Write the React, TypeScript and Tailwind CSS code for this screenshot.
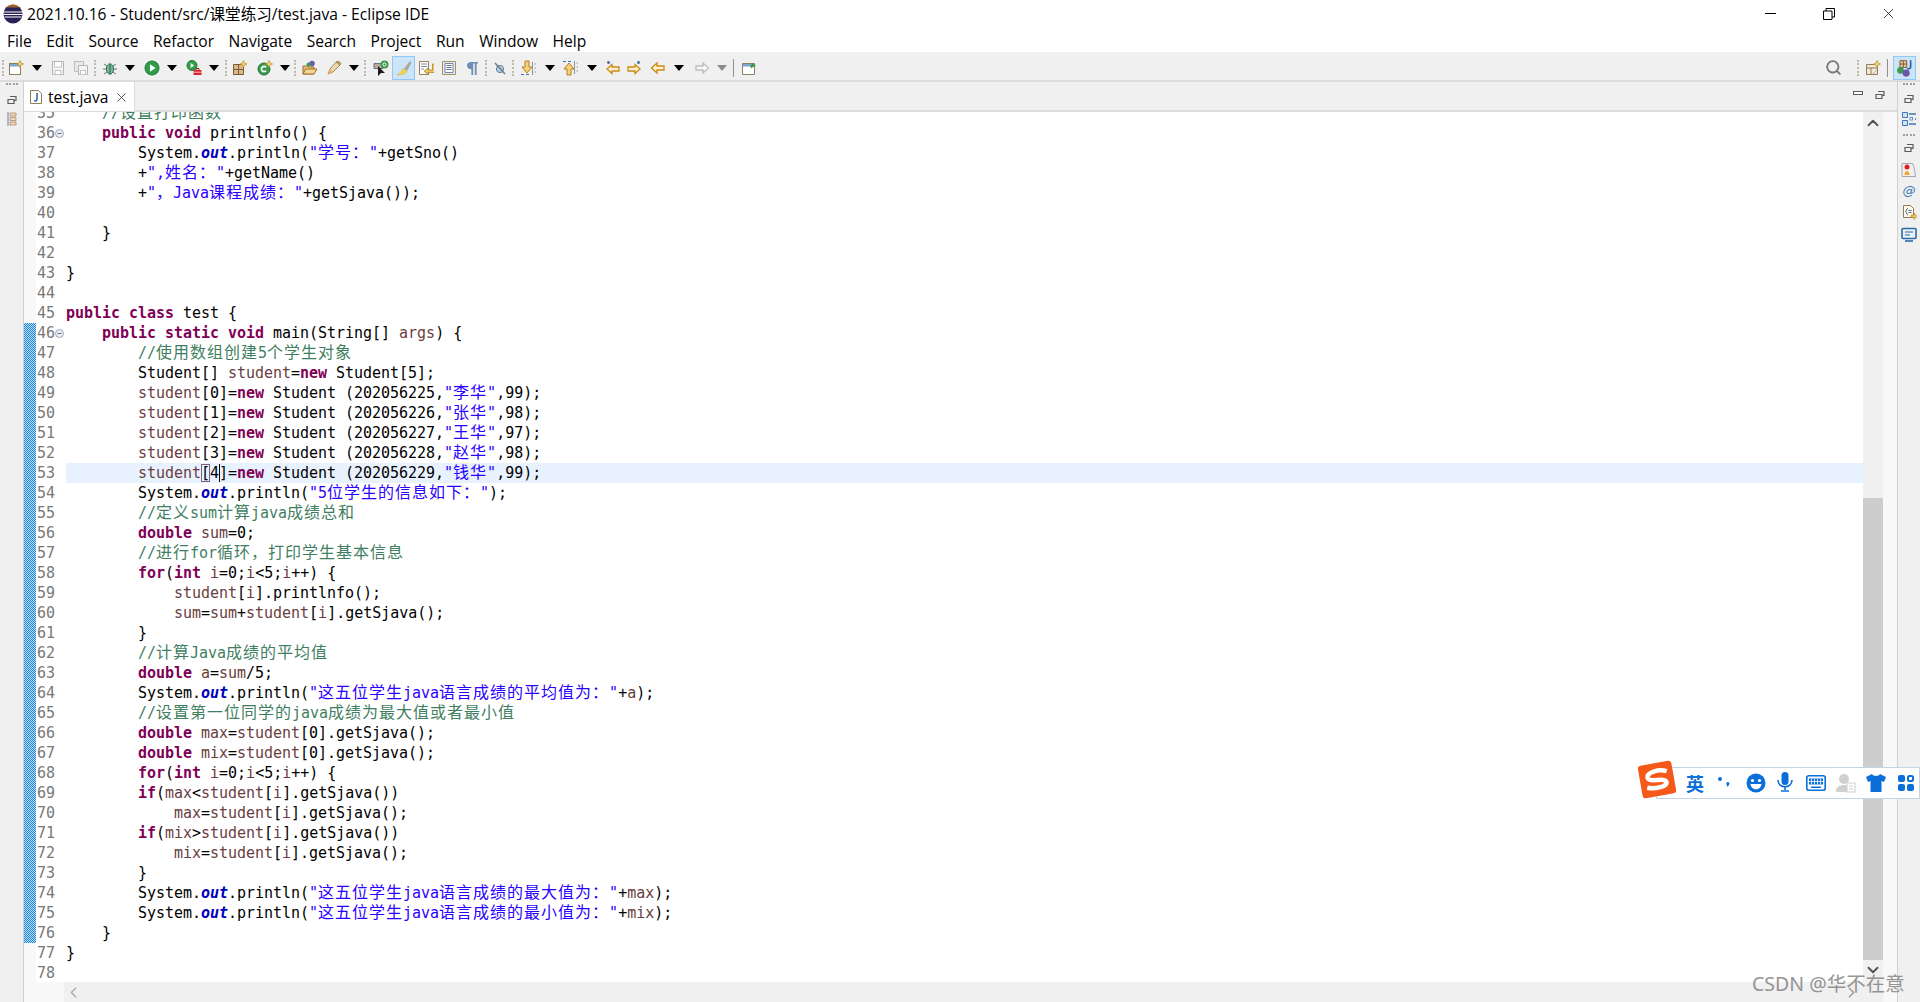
import { ChevronDown, ChevronLeft, ChevronRight, ChevronUp, Search, X } from "lucide-react";
import type { ReactNode } from "react";

const ui = "font-['Open_Sans','Noto_Sans_CJK_SC',sans-serif]";

const code = `    //设置打印函数
    public void printlnfo() {
        System.out.println("学号："+getSno()
        +",姓名："+getName()
        +"，Java课程成绩："+getSjava());

    }

}

public class test {
    public static void main(String[] args) {
        //使用数组创建5个学生对象
        Student[] student=new Student[5];
        student[0]=new Student (202056225,"李华",99);
        student[1]=new Student (202056226,"张华",98);
        student[2]=new Student (202056227,"王华",97);
        student[3]=new Student (202056228,"赵华",98);
        student[4]=new Student (202056229,"钱华",99);
        System.out.println("5位学生的信息如下：");
        //定义sum计算java成绩总和
        double sum=0;
        //进行for循环，打印学生基本信息
        for(int i=0;i<5;i++) {
            student[i].printlnfo();
            sum=sum+student[i].getSjava();
        }
        //计算Java成绩的平均值
        double a=sum/5;
        System.out.println("这五位学生java语言成绩的平均值为："+a);
        //设置第一位同学的java成绩为最大值或者最小值
        double max=student[0].getSjava();
        double mix=student[0].getSjava();
        for(int i=0;i<5;i++) {
        if(max<student[i].getSjava())
            max=student[i].getSjava();
        if(mix>student[i].getSjava())
            mix=student[i].getSjava();
        }
        System.out.println("这五位学生java语言成绩的最大值为："+max);
        System.out.println("这五位学生java语言成绩的最小值为："+mix);
    }
}
`.split("\n");

const tokenRe =
  /(\/\/.*$)|("[^"]*")|\b(public|void|class|static|new|double|int|for|if)\b|\b(out)\b|\b(student|args|sum|a|max|mix|i)\b/g;

// cjk glyphs are 17px wide in the editor, leading-[0] keeps the baseline on the mono font
const Wide = ({ text }: { text: string }) => (
  <>
    {text.split(/([\u3000-\u9fff\uff00-\uffef]+)/).map((part, i) =>
      i % 2 ? (
        <span key={i} className="font-['Noto_Sans_CJK_SC',sans-serif] text-[16px] leading-[0] tracking-[1px]">
          {part}
        </span>
      ) : (
        part
      ),
    )}
  </>
);

const highlight = (line: string) => {
  const out: ReactNode[] = [];
  let last = 0;
  for (const m of line.matchAll(tokenRe)) {
    const at = m.index ?? 0;
    if (at > last) out.push(<Wide key={last} text={line.slice(last, at)} />);
    if (m[1]) out.push(<span key={at} className="text-[#3f7f5f]"><Wide text={m[1]} /></span>);
    else if (m[2]) out.push(<span key={at} className="text-[#2a00ff]"><Wide text={m[2]} /></span>);
    else if (m[3]) out.push(<span key={at} className="font-bold text-[#7f0055]">{m[3]}</span>);
    else if (m[4]) out.push(<span key={at} className="font-bold italic text-[#0000c0]">{m[4]}</span>);
    else out.push(<span key={at} className="text-[#6a3e3e]">{m[5]}</span>);
    last = at + m[0].length;
  }
  if (last < line.length) out.push(<Wide key={last} text={line.slice(last)} />);
  return out;
};

const Ico = ({ children, className = "" }: { children: ReactNode; className?: string }) => (
  <svg viewBox="0 0 16 16" className={`h-4 w-4 shrink-0 ${className}`}>
    {children}
  </svg>
);

const Arrow = ({ className = "", off = false }: { className?: string; off?: boolean }) => (
  <svg viewBox="0 0 10 6" className={`h-[6px] w-[10px] shrink-0 ${className}`}>
    <path d="M0 0h10L5 6z" fill={off ? "#8c8c8c" : "#000"} />
  </svg>
);

const Grip = ({ className = "" }: { className?: string }) => (
  <div className={`h-4 w-[2px] shrink-0 border-l-2 border-dotted border-[#bdb8a8] ${className}`} />
);

const Star = ({ x = 12, y = 4 }: { x?: number; y?: number }) => (
  <path d={`M${x} ${y - 3.5}l1 2.5 2.5 1-2.5 1-1 2.5-1-2.5-2.5-1 2.5-1z`} fill="#f8d878" stroke="#b98b22" strokeWidth=".7" />
);

const Restore = ({ className = "" }: { className?: string }) => (
  <svg viewBox="0 0 10 10" className={`h-[10px] w-[10px] shrink-0 ${className}`}>
    <path d="M3 1.5h6v4H7M1 4.5h6v4H1zM1 4.5h6M3 1.5h6" fill="none" stroke="#5c5c5c" strokeWidth="1.2" />
  </svg>
);

const NewFile = (p: { className?: string }) => (
  <Ico {...p}>
    <rect x="1.5" y="3.5" width="11" height="11" fill="#fff" stroke="#8d7f52" />
    <rect x="2" y="4" width="10" height="2.5" fill="#7aa7d6" />
    <Star x={12} y={4} />
  </Ico>
);
const Floppy = ({ className = "" }: { className?: string }) => (
  <Ico className={className}>
    <path d="M2.5 1.5h11v13h-11z" fill="#f4f4f4" stroke="#b5b5b5" />
    <path d="M4.5 2v5h7V2M5 10.5h6v4H5z" fill="#fff" stroke="#c2c2c2" />
  </Ico>
);
const FloppyAll = ({ className = "" }: { className?: string }) => (
  <Ico className={className}>
    <path d="M1.5 1.5h9v10h-9z" fill="#e9e9e9" stroke="#bdbdbd" />
    <path d="M5.5 5.5h9v9h-9z" fill="#f4f4f4" stroke="#b5b5b5" />
    <path d="M7.5 10.5h5v4h-5z" fill="#fff" stroke="#c2c2c2" />
  </Ico>
);
const Bug = ({ className = "" }: { className?: string }) => (
  <Ico className={className}>
    <path d="M2 4l3 2M14 4l-3 2M1 9h3M15 9h-3M2 14l3-2M14 14l-3-2" stroke="#5b7f6b" fill="none" />
    <ellipse cx="8" cy="9" rx="3.6" ry="5.2" fill="#79b99c" stroke="#3f6f5e" />
    <path d="M8 4v10" stroke="#2f5f50" />
  </Ico>
);
const Run = ({ className = "" }: { className?: string }) => (
  <Ico className={className}>
    <circle cx="8" cy="8" r="7" fill="#2f9e48" stroke="#1c7a34" />
    <path d="M6 4.2l5.5 3.8L6 11.8z" fill="#fff" />
  </Ico>
);
const RunExt = ({ className = "" }: { className?: string }) => (
  <Ico className={className}>
    <circle cx="6" cy="5.5" r="5" fill="#2f9e48" stroke="#1c7a34" />
    <path d="M4.6 3l3.6 2.5L4.6 8z" fill="#fff" />
    <rect x="7.5" y="10" width="8" height="5" fill="#d8262c" />
    <path d="M10 10V8.5h3V10" fill="none" stroke="#a31a1e" />
    <path d="M7.5 12.2h8" stroke="#fff" strokeWidth=".7" />
  </Ico>
);
const Pkg = ({ className = "" }: { className?: string }) => (
  <Ico className={className}>
    <path d="M1.5 4.5h10v10h-10z" fill="#d9b98c" stroke="#7d5a34" />
    <path d="M6.5 4.5v10M1.5 9.5h10" stroke="#7d5a34" />
    <Star x={11.5} y={4} />
  </Ico>
);
const NewClass = ({ className = "" }: { className?: string }) => (
  <Ico className={className}>
    <circle cx="7" cy="9" r="6" fill="#3c9a50" stroke="#20733a" />
    <path d="M9 7.2a2.6 2.6 0 1 0 0 3.6" fill="none" stroke="#fff" strokeWidth="1.6" />
    <Star x={12} y={4} />
  </Ico>
);
const OpenType = ({ className = "" }: { className?: string }) => (
  <Ico className={className}>
    <path d="M1 6h5l1 1h5v7H1z" fill="#e8c070" stroke="#99702a" />
    <path d="M1 14l2.5-5H15l-3 5z" fill="#f4d58f" stroke="#99702a" />
    <circle cx="10" cy="3.6" r="2.8" fill="#6e5fa8" />
    <circle cx="6.5" cy="4.5" r="2" fill="#3e9a58" />
  </Ico>
);
const Torch = ({ className = "" }: { className?: string }) => (
  <Ico className={className}>
    <path d="M2 14l2-5 6-7 4 3-7 7z" fill="#ecd9b0" stroke="#a88a52" />
    <path d="M10 2l4 3 1-2-3-2z" fill="#c7a468" stroke="#8f7038" strokeWidth=".6" />
    <path d="M2 14l2-5 3 3z" fill="#f3b26a" />
  </Ico>
);
const Toggle = ({ className = "" }: { className?: string }) => (
  <Ico className={className}>
    <path d="M1 3.5h9v5H1z" fill="#b9a8a0" stroke="#6f6f7f" />
    <circle cx="11.5" cy="4.5" r="4" fill="#3c9a50" />
    <circle cx="11.5" cy="4.5" r="1.6" fill="none" stroke="#fff" />
    <path d="M5 6v10l3-3h4z" fill="#1a1a1a" />
  </Ico>
);
const Brush = ({ className = "" }: { className?: string }) => (
  <Ico className={className}>
    <path d="M8 9L14 1l1.5 1.5L11 11z" fill="#a8a8a0" />
    <path d="M7 8.5l4 3c-1.5 2.5-5 3.5-10 3.5 2.5-1 4.5-3.5 6-6.5z" fill="#f2d750" stroke="#cfae2e" strokeWidth=".5" />
  </Ico>
);
const WordWrap = ({ className = "" }: { className?: string }) => (
  <Ico className={className}>
    <path d="M1.5 1.5h9v13h-9z" fill="#fff" stroke="#98835a" />
    <path d="M3 4h6M3 6.5h6M3 9h3" stroke="#7d8aa8" />
    <path d="M14.5 4v6H10V8l-4 3.2L10 14.5V12.5h6.5V4z" fill="#f0c460" stroke="#a87c1c" strokeWidth=".7" />
  </Ico>
);
const Block = ({ className = "" }: { className?: string }) => (
  <Ico className={className}>
    <path d="M1.5 1.5h13v13h-13z" fill="#eee8d8" stroke="#a09470" />
    <path d="M4 3.5h8v9H4z" fill="#fff" stroke="#6f87ad" />
    <path d="M5.5 5.5h5M5.5 7.5h5M5.5 9.5h5" stroke="#5a78a8" />
  </Ico>
);
const Para = ({ className = "" }: { className?: string }) => (
  <Ico className={className}>
    <path d="M7 2h7v1.6h-1.4V15h-1.8V3.6H9.2V15H7.4V9.3C4.8 9.3 3 7.9 3 5.6S4.6 2 7 2z" fill="#6d8fb5" />
  </Ico>
);
const Hide = ({ className = "" }: { className?: string }) => (
  <Ico className={className}>
    <ellipse cx="8" cy="9" rx="3.6" ry="3.6" fill="#b8cfe2" stroke="#5e7fa3" />
    <path d="M3 3l10 11" stroke="#6d7580" strokeWidth="1.4" />
  </Ico>
);
const NextAnn = ({ className = "" }: { className?: string }) => (
  <Ico className={className}>
    <path d="M5 1h4v6h3l-5 6-5-6h3z" fill="#f7d27a" stroke="#b5801c" />
    <path d="M1 14.5h3M6 14.5h3" stroke="#3d6fae" />
    <path d="M12.5 2v13M14.5 4h1.5M14.5 8h1.5M14.5 12h1.5" stroke="#8b95a5" />
  </Ico>
);
const PrevAnn = ({ className = "" }: { className?: string }) => (
  <Ico className={className}>
    <path d="M5 15h4V9h3L7 3 2 9h3z" fill="#f7d27a" stroke="#b5801c" />
    <path d="M1 1.5h3M6 1.5h3" stroke="#3d6fae" />
    <path d="M12.5 1v13M14.5 3h1.5M14.5 7h1.5M14.5 11h1.5" stroke="#8b95a5" />
  </Ico>
);
const BackStar = ({ className = "" }: { className?: string }) => (
  <Ico className={className}>
    <path d="M8 4.5L3 9l5 4.5V11h7V7H8z" fill="#fff3cf" stroke="#c98a18" strokeWidth="1.3" />
    <path d="M3 2.5h3M4.5 1v3M3.4 1.4l2.2 2.2M5.6 1.4L3.4 3.6" stroke="#3a5fa0" strokeWidth=".8" />
  </Ico>
);
const FwdStar = ({ className = "" }: { className?: string }) => (
  <Ico className={className}>
    <path d="M8 4.5L13 9l-5 4.5V11H1V7h7z" fill="#fff3cf" stroke="#c98a18" strokeWidth="1.3" />
    <path d="M10 2.5h3M11.5 1v3M10.4 1.4l2.2 2.2M12.6 1.4l-2.2 2.2" stroke="#3a5fa0" strokeWidth=".8" />
  </Ico>
);
const Back = ({ className = "" }: { className?: string }) => (
  <Ico className={className}>
    <path d="M7 3L1.5 8 7 13v-3h7V6H7z" fill="#fff3cf" stroke="#c98a18" strokeWidth="1.3" />
  </Ico>
);
const Fwd = ({ className = "" }: { className?: string }) => (
  <Ico className={className}>
    <path d="M9 3l5.5 5L9 13v-3H2V6h7z" fill="#f8f8f8" stroke="#bdbdbd" strokeWidth="1.3" />
  </Ico>
);
const PinWin = ({ className = "" }: { className?: string }) => (
  <Ico className={className}>
    <path d="M1.5 3.5h12v11h-12z" fill="#fff" stroke="#8c8060" />
    <path d="M2 4h11v2.5H2z" fill="#7aa7d6" />
    <path d="M9 6l3-3 3 3-3 1-1.5 1.5z" fill="#3c9a50" />
  </Ico>
);
const Persp = ({ className = "" }: { className?: string }) => (
  <Ico className={className}>
    <path d="M1.5 4.5h11v10h-11z" fill="#efe8d6" stroke="#8d7f52" />
    <path d="M1.5 8h11M6 8v6.5" stroke="#8d7f52" />
    <path d="M8 14l4-4" stroke="#b5b5a0" />
    <Star x={12} y={4} />
  </Ico>
);
const JavaPersp = ({ className = "" }: { className?: string }) => (
  <Ico className={`h-[18px] w-[18px] ${className}`}>
    <path d="M3.5 1.5h6v6h-6zM6.5 1.5v6M3.5 4.5h6" fill="#e3c9a0" stroke="#7a4f2a" strokeWidth=".8" />
    <path d="M13 1v6c0 1.5-1.5 2-3 1.6" fill="none" stroke="#2f5fa8" strokeWidth="1.5" />
    <circle cx="4" cy="10" r="3" fill="#3c9a50" />
    <circle cx="9" cy="12.5" r="3.2" fill="#6b55a8" />
  </Ico>
);
const Outline = ({ className = "" }: { className?: string }) => (
  <Ico className={className}>
    <path d="M1.5 1.5h5v5h-5zM1.5 9.5h5v5h-5z" fill="#cfe2f5" stroke="#3d77b5" />
    <path d="M8 3h7M14 8h1M8 13h7" stroke="#3d77b5" strokeWidth="1.3" />
    <rect x="9" y="6.5" width="2.5" height="2.5" fill="#fff" stroke="#3d77b5" strokeWidth=".8" />
  </Ico>
);
const Markers = ({ className = "" }: { className?: string }) => (
  <Ico className={className}>
    <path d="M1 1.5h10.5c1.5 3 2.5 8 3 13H1z" fill="#f2f0ea" stroke="#a0a8b8" />
    <circle cx="6" cy="5" r="2.5" fill="#e01f2c" />
    <path d="M3.5 13c0-2 1-4 2.5-4s2.5 2 2.5 4z" fill="#f2a43a" />
  </Ico>
);
const JavaDoc = ({ className = "" }: { className?: string }) => (
  <Ico className={className}>
    <path d="M2.5 1.5h7l3 3v9h-10z" fill="#fff8e6" stroke="#8d7f52" />
    <path d="M7 4.5C5 4.5 6 7.5 4.5 7.5 6 7.5 5 11 7 11M7.5 6.5h3M7.5 8.5h3" fill="none" stroke="#4d6d96" />
    <path d="M10 11h3V9l3 3.5-3 3V13.5h-3z" fill="#f0c460" stroke="#a87c1c" strokeWidth=".6" />
  </Ico>
);
const Console = ({ className = "" }: { className?: string }) => (
  <Ico className={className}>
    <rect x="1" y="1.5" width="14" height="10" rx="1" fill="#e9f1f9" stroke="#2c6ba5" strokeWidth="1.6" />
    <path d="M4 5h8M4 8h5" stroke="#2c6ba5" />
    <path d="M4 14h8" stroke="#2c6ba5" strokeWidth="1.6" />
  </Ico>
);

const Sogou = () => (
  <div className="absolute left-[1656px] top-[767px] flex h-[32px] w-[264px] items-center border border-[#c4d4e6] bg-white">
    <div className="absolute -left-[17px] -top-[5px] flex h-[33px] w-[34px] rotate-[-10deg] items-center justify-center rounded-[3px] bg-[#f4581a]">
      <svg viewBox="0 0 30 24" className="h-[24px] w-[30px]">
        <path d="M26 5C18 1 6 3 6 8c0 6 18 2 18 8 0 4-12 5-20 2" fill="none" stroke="#fff" strokeWidth="4.5" />
      </svg>
    </div>
    <span className="absolute left-[29px] top-[3px] font-['Noto_Sans_CJK_SC',sans-serif] text-[18px] font-bold leading-[24px] text-[#0a6fd8]">英</span>
    <svg viewBox="0 0 16 16" className="absolute left-[60px] top-[6px] h-4 w-4">
      <circle cx="3" cy="5" r="2" fill="#0a6fd8" />
      <path d="M11 8c2 0 2 3-1 5 .5-1.500 0-2-.6-2.500C9 9 10 8 11 8z" fill="#0a6fd8" />
    </svg>
    <svg viewBox="0 0 20 20" className="absolute left-[89px] top-[5px] h-5 w-5">
      <circle cx="10" cy="10" r="9.500" fill="#0a6fd8" />
      <circle cx="6.500" cy="7.500" r="1.600" fill="#fff" />
      <circle cx="13.500" cy="7.500" r="1.600" fill="#fff" />
      <path d="M4.500 11h11c-.5 7-10.500 7-11 0z" fill="#fff" />
    </svg>
    <svg viewBox="0 0 20 22" className="absolute left-[118px] top-[3px] h-[22px] w-5">
      <rect x="6.500" y="1" width="7" height="13" rx="3.500" fill="#0a6fd8" />
      <path d="M3 9c0 9 14 9 14 0M10 16v3M6 20h8" fill="none" stroke="#0a6fd8" strokeWidth="1.600" />
    </svg>
    <svg viewBox="0 0 20 16" className="absolute left-[149px] top-[7px] h-4 w-5">
      <rect x=".8" y=".8" width="18.400" height="14.400" rx="2" fill="#fff" stroke="#0a6fd8" strokeWidth="1.600" />
      <path d="M3 3.500h14v6H3zM5 11.500h10v1.500H5z" fill="#0a6fd8" />
      <path d="M5.500 3.500v6M8.500 3.500v6M11.500 3.500v6M14.500 3.500v6M3 6.500h14" stroke="#fff" strokeWidth=".8" />
    </svg>
    <svg viewBox="0 0 20 20" className="absolute left-[179px] top-[5px] h-5 w-5">
      <circle cx="8" cy="6" r="5" fill="#d0d0d0" />
      <path d="M0 19c0-5 3-7 8-7s8 2 8 7z" fill="#d0d0d0" />
      <rect x="11" y="10" width="8" height="9" fill="#fff" stroke="#cfcfcf" />
      <path d="M13 13h4M13 16h4" stroke="#cfcfcf" />
    </svg>
    <svg viewBox="0 0 20 20" className="absolute left-[209px] top-[5px] h-5 w-5">
      <path d="M6 1L0 4l2 5 2.500-1v11h11V8L18 9l2-5-6-3c-1 2.500-7 2.500-8 0z" fill="#0a6fd8" />
    </svg>
    <svg viewBox="0 0 18 18" className="absolute left-[240px] top-[6px] h-[18px] w-[18px]">
      <rect x="1" y="1" width="7" height="7" rx="2" fill="#0a6fd8" />
      <rect x="11" y="2" width="5" height="5" rx="1.500" fill="#fff" stroke="#0a6fd8" strokeWidth="2" />
      <rect x="1" y="10" width="7" height="7" rx="2" fill="#0a6fd8" />
      <rect x="10" y="10" width="7" height="7" rx="2" fill="#0a6fd8" />
    </svg>
  </div>
);

export default function App() {
  return (
    <div className={`relative flex h-[1002px] w-[1920px] flex-col overflow-hidden bg-white text-black ${ui}`}>
      {/* title bar */}
      <div className="flex h-[30px] shrink-0 items-center pb-[3px]">
        <svg viewBox="0 0 20 20" className="ml-[3px] h-5 w-5 shrink-0">
          <circle cx="10" cy="10" r="9.500" fill="#2c2255" />
          <path d="M1 8h18M.6 10.500h18.800M1.500 13h17" stroke="#fff" strokeWidth="1" />
          <path d="M3 3.500a9 9 0 0 1 14 0z" fill="#f7941e" opacity=".55" />
        </svg>
        <span className="ml-[4px] text-[15.6px] leading-5">2021.10.16 - Student/src/课堂练习/test.java - Eclipse IDE</span>
        <div className="ml-auto flex items-center">
          <div className="mr-[47px] h-[1px] w-[11px] bg-black" />
          <svg viewBox="0 0 12 12" className="mr-[45px] h-3 w-3">
            <path d="M.5 3h8.500v8.500H.5zM3 3V.5h8.500V9H9" fill="none" stroke="#000" />
          </svg>
          <X className="mr-[23px] h-[17px] w-[17px]" strokeWidth={1} />
        </div>
      </div>

      {/* menu */}
      <div className="flex h-[22px] shrink-0 items-center gap-[14.5px] pl-[7px] text-[15.6px] leading-5">
        <span>File</span>
        <span>Edit</span>
        <span>Source</span>
        <span>Refactor</span>
        <span>Navigate</span>
        <span>Search</span>
        <span>Project</span>
        <span>Run</span>
        <span>Window</span>
        <span>Help</span>
      </div>

      {/* toolbar */}
      <div className="flex h-[30px] shrink-0 items-center border-b-2 border-[#dcdcdc] bg-[#f0f0f0] pl-[2px] pt-[3px]">
        <Grip />
        <NewFile className="ml-[4px]" />
        <Arrow className="ml-[8px]" />
        <Floppy className="ml-[8px]" />
        <FloppyAll className="ml-[7px]" />
        <Grip className="ml-[5px]" />
        <Bug className="ml-[6px]" />
        <Arrow className="ml-[7px]" />
        <Run className="ml-[9px]" />
        <Arrow className="ml-[7px]" />
        <RunExt className="ml-[9px]" />
        <Arrow className="ml-[7px]" />
        <Grip className="ml-[6px]" />
        <Pkg className="ml-[5px]" />
        <NewClass className="ml-[9px]" />
        <Arrow className="ml-[7px]" />
        <Grip className="ml-[4px]" />
        <OpenType className="ml-[6px]" />
        <Torch className="ml-[8px]" />
        <Arrow className="ml-[7px]" />
        <Grip className="ml-[5px]" />
        <Toggle className="ml-[7px]" />
        <div className="ml-[3px] flex h-[24px] w-[23px] shrink-0 items-center justify-center border border-[#90c8f6] bg-[#cce4f7]">
          <Brush />
        </div>
        <WordWrap className="ml-[3px]" />
        <Block className="ml-[7px]" />
        <Para className="ml-[7px]" />
        <Grip className="ml-[5px]" />
        <Hide className="ml-[5px]" />
        <Grip className="ml-[4px]" />
        <NextAnn className="ml-[6px]" />
        <Arrow className="ml-[9px]" />
        <PrevAnn className="ml-[7px]" />
        <Arrow className="ml-[9px]" />
        <BackStar className="ml-[7px]" />
        <FwdStar className="ml-[7px]" />
        <Back className="ml-[7px]" />
        <Arrow className="ml-[8px]" />
        <Fwd className="ml-[10px]" />
        <Arrow off className="ml-[7px]" />
        <div className="ml-[6px] h-[18px] w-[1px] shrink-0 bg-[#8f8f8f]" />
        <PinWin className="ml-[7px]" />
        <div className="ml-auto flex items-center">
          <Search className="h-[17px] w-[17px] text-[#777]" strokeWidth={2.6} />
          <Grip className="ml-[15px]" />
          <Persp className="ml-[6px]" />
          <div className="ml-[6px] h-[18px] w-[1px] bg-[#8f8f8f]" />
          <div className="ml-[5px] mr-[4px] flex h-[24px] w-[23px] items-center justify-center border border-[#90c8f6] bg-[#cce4f7]">
            <JavaPersp />
          </div>
        </div>
      </div>

      <div className="flex min-h-0 flex-1">
        {/* left trim */}
        <div className="flex w-[24px] shrink-0 flex-col items-center border-r border-[#d0d0d0] bg-[#f0f0f0] pt-[1px]">
          <div className="h-[2px] w-[12px] border-t-2 border-dotted border-[#a0a0a0]" />
          <Restore className="mt-[10px]" />
          <svg viewBox="0 0 10 14" className="mt-[7px] h-[14px] w-[10px]">
            <path d="M1 0v14" stroke="#6d7fa0" />
            <path d="M3 1h6v3H3zM3 5.500h6v3H3zM3 10h6v3H3z" fill="#efd9bd" stroke="#a8805a" strokeWidth=".7" />
          </svg>
        </div>

        {/* editor stack */}
        <div className="flex min-w-0 flex-1 flex-col">
          <div className="flex h-[30px] shrink-0 border-b-2 border-[#dcdcdc] bg-[#f0f0f0]">
            <div className="flex h-[29px] w-[111px] shrink-0 items-center border-r border-[#dcdcdc] bg-white pl-[6px] pt-[1px]">
              <svg viewBox="0 0 12 14" className="h-[14px] w-[12px] shrink-0">
                <path d="M.5.5h8l3 3v10H.500z" fill="#fff" stroke="#8d7f52" />
                <path d="M7 3v6.500c0 1.500-2 2-3 1" fill="none" stroke="#2f5fa8" strokeWidth="1.500" />
              </svg>
              <span className="ml-[6px] text-[15.6px] leading-5">test.java</span>
              <X className="ml-[6px] h-[15px] w-[15px] text-[#333]" strokeWidth={1.3} />
            </div>
            <div className="ml-auto flex items-center pb-[6px] pr-[12px]">
              <div className="h-[4px] w-[10px] border border-[#5c5c5c] bg-white" />
              <Restore className="ml-[12px] mt-[3px]" />
            </div>
          </div>

          <div className="flex min-h-0 flex-1">
            <div className="flex min-w-0 flex-1 flex-col">
              <div className="min-h-0 flex-1 overflow-hidden">
                <div className="-mt-[9px] font-['DejaVu_Sans_Mono',monospace] text-[15px] leading-5 tracking-[-0.03px]">
                  {code.map((line, i) => {
                    const no = i + 35;
                    return (
                      <div key={no} className="flex h-5 whitespace-pre">
                        <div
                          className={`w-[12px] shrink-0 ${
                            no >= 46 && no <= 76
                              ? "bg-[repeating-conic-gradient(#1f86dc_0_25%,#bcdcf5_0_50%)] bg-[length:2px_2px]"
                              : "bg-[#f8f8f8]"
                          }`}
                        />
                        <div className="w-[19px] shrink-0 text-right text-[#787878]">{no}</div>
                        <div className="flex w-[9px] shrink-0 items-center justify-end">
                          {(no === 36 || no === 46) && (
                            <svg viewBox="0 0 9 9" className="h-[9px] w-[9px]">
                              <circle cx="4.500" cy="4.500" r="4" fill="#e8eef4" stroke="#9aa8b8" />
                              <path d="M2.500 4.500h4" stroke="#5f7080" />
                            </svg>
                          )}
                        </div>
                        <div className={`relative ml-[2px] flex-1 ${no === 53 ? "bg-[#e8f2fe]" : ""}`}>
                          {highlight(line)}
                          {no === 53 && (
                            <>
                              <div className="absolute left-[135px] top-[1px] h-[18px] w-[9px] border border-[#7f5f7f]" />
                              <div className="absolute left-[153px] top-[1px] h-[18px] w-[1px] bg-black" />
                            </>
                          )}
                        </div>
                      </div>
                    );
                  })}
                </div>
              </div>
              <div className="flex h-[20px] shrink-0 bg-[#f8f8f8]">
                <div className="w-[40px] shrink-0" />
                <div className="flex flex-1 items-center justify-between bg-[#f0f0f0] pl-[1px] pr-[3px]">
                  <ChevronLeft className="h-[17px] w-[17px] text-[#b0b0b0]" strokeWidth={2.4} />
                  <ChevronRight className="h-[17px] w-[17px] text-[#a0a0a0]" strokeWidth={2.4} />
                </div>
              </div>
            </div>

            {/* vertical scrollbar + overview ruler */}
            <div className="flex w-[20px] shrink-0 flex-col bg-[#f0f0f0]">
              <div className="h-[386px] shrink-0">
                <ChevronUp className="ml-[1px] mt-[2px] h-[18px] w-[18px] text-[#505050]" strokeWidth={2.4} />
              </div>
              <div className="h-[462px] shrink-0 bg-[#cdcdcd]" />
              <ChevronDown className="ml-[1px] mt-[1px] h-[18px] w-[18px] text-[#505050]" strokeWidth={2.4} />
            </div>
            <div className="w-[14px] shrink-0 bg-[#f8f8f8]" />
          </div>
        </div>

        {/* right trim */}
        <div className="flex w-[23px] shrink-0 flex-col items-center border-l border-[#d0d0d0] bg-[#f0f0f0] pt-[1px]">
          <div className="h-[2px] w-[12px] border-t-2 border-dotted border-[#a0a0a0]" />
          <Restore className="mt-[9px]" />
          <Outline className="mt-[7px]" />
          <div className="mt-[7px] h-[2px] w-[12px] border-t-2 border-dotted border-[#a0a0a0]" />
          <Restore className="mt-[7px]" />
          <Markers className="mt-[9px]" />
          <span className="mt-[4px] font-['DejaVu_Sans',sans-serif] text-[13px] italic leading-[17px] text-[#3d77b5]">@</span>
          <JavaDoc className="mt-[5px]" />
          <Console className="mt-[7px]" />
        </div>
      </div>

      <Sogou />
      <div className="absolute left-[1752px] top-[969px] whitespace-nowrap font-['Noto_Sans','Noto_Sans_CJK_SC',sans-serif] text-[19.5px] leading-[30px] text-[#8a8a8a] opacity-90">
        CSDN @华不在意
      </div>
    </div>
  );
}
